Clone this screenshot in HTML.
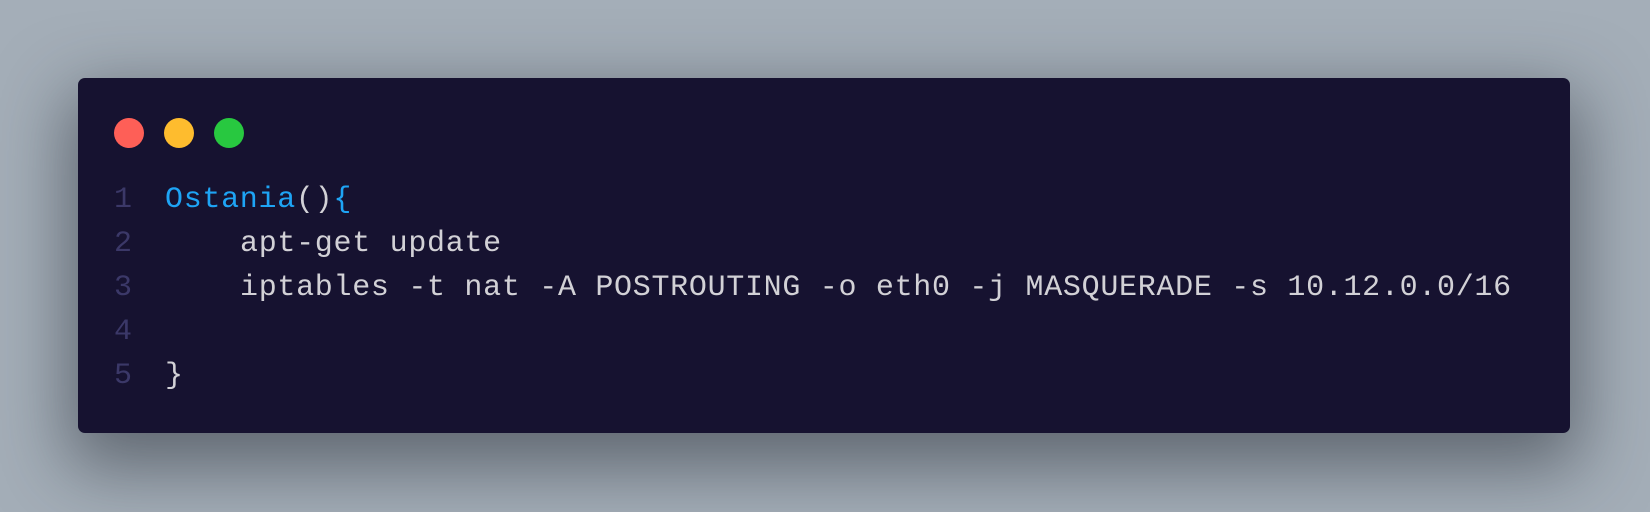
<!DOCTYPE html>
<html><head><meta charset="utf-8"><style>
html,body{margin:0;padding:0;width:1650px;height:512px;overflow:hidden;background:#a4aeb8;}
.win{position:absolute;left:78px;top:78px;width:1492px;height:355px;background:#161230;border-radius:7px;box-shadow:0 25px 70px 10px rgba(40,45,55,0.55);}
.dot{position:absolute;top:118px;width:30px;height:30px;border-radius:50%;}
.t{position:absolute;font-family:"Liberation Mono",monospace;font-size:30px;letter-spacing:0.7px;white-space:pre;line-height:44px;color:#d2d1d6;}
.n{color:#3b3868;}
</style></head><body>
<div class="win"></div>
<div class="dot" style="left:114px;background:#fe5f57"></div>
<div class="dot" style="left:164px;background:#febc2e"></div>
<div class="dot" style="left:214px;background:#28c840"></div>
<div class="t n" style="left:114px;top:178px">1<br>2<br>3<br>4<br>5</div>
<div class="t" style="left:165px;top:178px"><span style="color:#1ea4f5">Ostania</span>()<span style="color:#1ea4f5">{</span></div>
<div class="t" style="left:240px;top:222px">apt-get update</div>
<div class="t" style="left:240px;top:266px">iptables -t nat -A POSTROUTING -o eth0 -j MASQUERADE -s 10.12.0.0/16</div>
<div class="t" style="left:165px;top:354px">}</div>
</body></html>
